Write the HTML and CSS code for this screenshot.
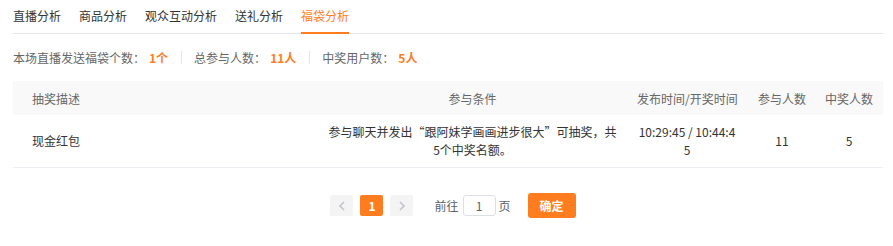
FILE: index.html
```html
<!DOCTYPE html>
<html lang="zh-CN">
<head>
<meta charset="utf-8">
<link rel="stylesheet" href="styles.css">
</head>
<body>
<div class="page">
  <div class="tabs">
    <div class="tab">直播分析</div>
    <div class="tab">商品分析</div>
    <div class="tab">观众互动分析</div>
    <div class="tab">送礼分析</div>
    <div class="tab active">福袋分析</div>
  </div>
  <div class="summary">
    <div class="item">本场直播发送福袋个数：<b>1个</b></div>
    <div class="sep"></div>
    <div class="item">总参与人数：<b>11人</b></div>
    <div class="sep"></div>
    <div class="item">中奖用户数：<b>5人</b></div>
  </div>
  <table class="grid">
    <colgroup>
      <col class="c1"><col class="c2"><col class="c3"><col class="c4"><col class="c5">
    </colgroup>
    <thead>
      <tr>
        <th class="left">抽奖描述</th>
        <th class="cond">参与条件</th>
        <th class="time">发布时间/开奖时间</th>
        <th>参与人数</th>
        <th>中奖人数</th>
      </tr>
    </thead>
    <tbody>
      <tr>
        <td class="left">现金红包</td>
        <td class="cond">参与聊天并发出“跟阿妹学画画进步很大”可抽奖，共<br>5个中奖名额。</td>
        <td class="time">10:29:45 / 10:44:45</td>
        <td>11</td>
        <td>5</td>
      </tr>
    </tbody>
  </table>
  <div class="pager">
    <span class="pbtn">
      <svg width="8" height="10" viewBox="0 0 8 10"><path d="M6 1 L2 5 L6 9" fill="none" stroke="#c0c4cc" stroke-width="1.6"/></svg>
    </span>
    <span class="pbtn cur">1</span>
    <span class="pbtn">
      <svg width="8" height="10" viewBox="0 0 8 10"><path d="M2 1 L6 5 L2 9" fill="none" stroke="#c0c4cc" stroke-width="1.6"/></svg>
    </span>
    <span class="jump">前往<span class="inp">1</span>页</span>
    <span class="ok">确定</span>
  </div>
</div>
</body>
</html>
```
FILE: styles.css
```css
html, body {
  margin: 0;
  padding: 0;
  background: #fff;
}
body {
  font-family: "Noto Sans CJK SC", "Microsoft YaHei", sans-serif;
  font-size: 12px;
  color: #333;
}
.page {
  width: 870px;
  padding: 0 10px 0 13px;
}
.tabs {
  display: flex;
  gap: 18px;
  border-bottom: 1px solid #e4e7ed;
  box-sizing: border-box;
  height: 34px;
}
.tab {
  line-height: 34px;
  height: 33px;
  box-sizing: border-box;
  color: #333;
  margin-top: -1px;
}
.tab.active {
  color: #ff7d1f;
  border-bottom: 2px solid #ff7d1f;
  height: 35px;
}
.summary {
  display: flex;
  align-items: center;
  height: 14px;
  margin-top: 16px;
  color: #666;
}
.summary b {
  color: #ff7d1f;
  margin-left: 4px;
  font-weight: bold;
}
.sep {
  width: 1px;
  height: 13px;
  background: #e5e5e5;
  margin: 0 12px 0 13px;
}
.grid {
  margin-top: 17px;
  width: 870px;
  border-collapse: collapse;
  table-layout: fixed;
}
.c1 { width: 307px; }
.c2 { width: 305px; }
.c3 { width: 124px; }
.c4 { width: 66px; }
.c5 { width: 68px; }
.grid th {
  background: #f9f9f9;
  color: #666;
  font-weight: normal;
  height: 34px;
  padding: 0 8px;
  text-align: center;
  white-space: nowrap;
}
.grid td {
  height: 52px;
  padding: 0 8px;
  text-align: center;
  border-bottom: 1px solid #ebeef5;
  line-height: 18px;
  color: #333;
}
.grid .left {
  text-align: left;
  padding-left: 19px;
}
.grid .cond {
  padding: 0 5px;
}
.grid .time {
  padding: 0 12px;
}
.grid td.time {
  word-break: break-all;
}
.pager {
  display: flex;
  align-items: center;
  justify-content: center;
  margin-top: 25px;
  padding-left: 10px;
}
.pbtn {
  width: 23px;
  height: 21px;
  background: #f4f4f5;
  border-radius: 2px;
  display: flex;
  align-items: center;
  justify-content: center;
  margin-right: 7px;
  font-weight: bold;
  color: #606266;
}
.pbtn.cur {
  background: #ff7d1f;
  color: #fff;
}
.jump {
  display: flex;
  align-items: center;
  color: #606266;
  margin-left: 14px;
}
.inp {
  width: 31px;
  height: 19px;
  border: 1px solid #dcdfe6;
  border-radius: 3px;
  margin: 0 3px 0 4px;
  display: flex;
  align-items: center;
  justify-content: center;
  color: #606266;
}
.ok {
  margin-left: 17px;
  width: 48px;
  height: 25px;
  background: #ff7d1f;
  color: #fff;
  border-radius: 3px;
  display: flex;
  align-items: center;
  justify-content: center;
  font-weight: bold;
}
```
